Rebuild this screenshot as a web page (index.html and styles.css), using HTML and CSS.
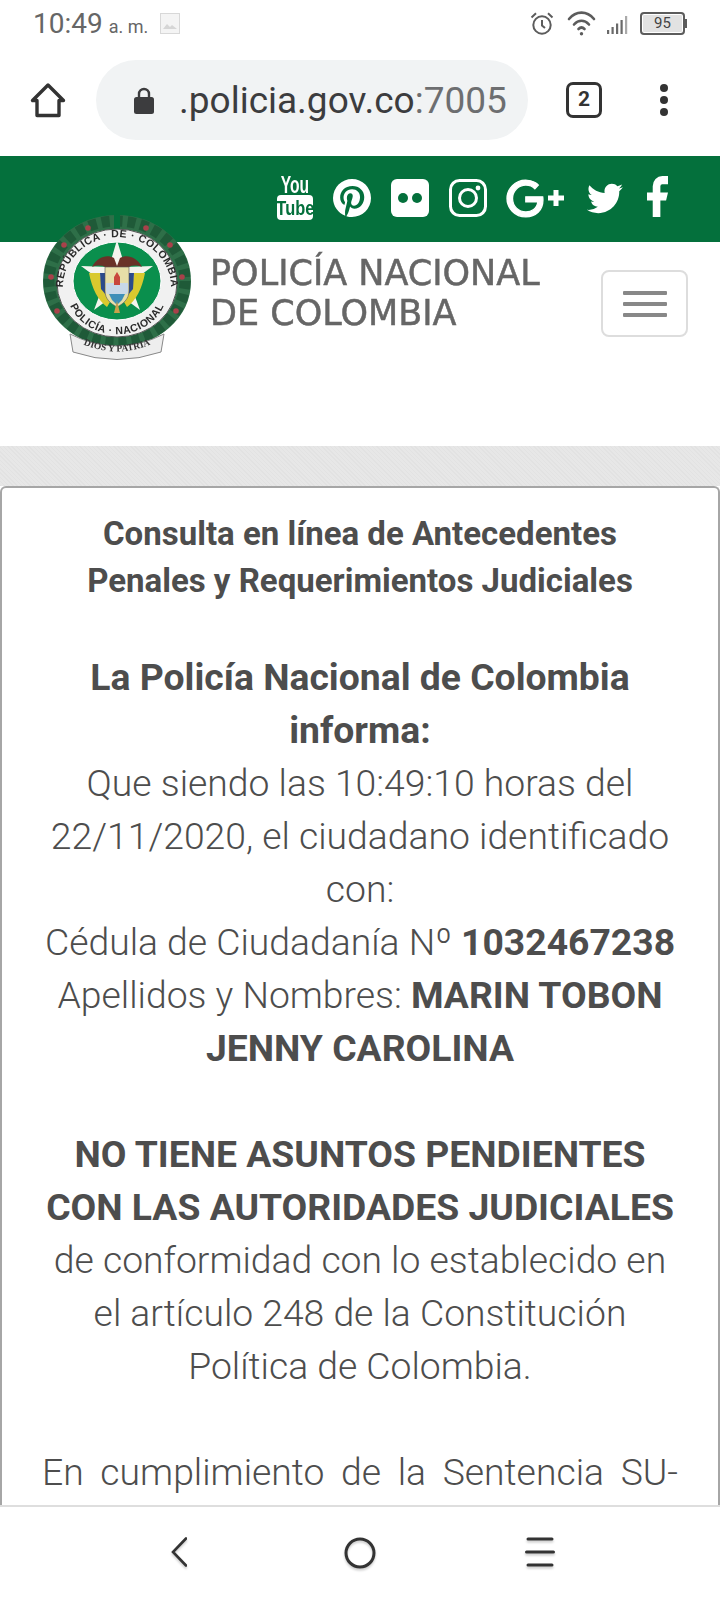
FILE: index.html
```html
<!DOCTYPE html>
<html lang="es">
<head>
<meta charset="utf-8">
<title>Consulta de Antecedentes</title>
<link rel="stylesheet" href="styles.css">
</head>
<body>
<div class="phone">
  <div class="status">
    <div class="status-left">
      <span class="clock">10:49</span><span class="ampm">a. m.</span>
      <svg class="st-img" viewBox="0 0 20 21"><rect x=".5" y=".5" width="19" height="20" fill="#f4f4f4" stroke="#d8d8d8"/><path d="M3 16l4-5 3 3 2-2 5 4z" fill="#d6d6d6"/></svg>
    </div>
    <div class="status-right">
      <svg class="st-alarm" viewBox="0 0 24 24" fill="none" stroke="#5c5c5c" stroke-width="2"><circle cx="12" cy="13.500" r="8.700"/><path d="M12 8.500v5.500l3 2.500M1.500 6L6 1.800M22.500 6L18 1.800"/></svg>
      <svg class="st-wifi" viewBox="0 0 29 25" fill="none" stroke="#5c5c5c" stroke-width="2.600" stroke-linecap="round"><path d="M2 8C9-.5 20-.5 27 8M7 13.500c4.500-5 10.500-5 15 0M11.500 18c2-2 4-2 6 0"/><circle cx="14.500" cy="22.800" r="1.700" fill="#5c5c5c" stroke="none"/></svg>
      <svg class="st-signal" viewBox="0 0 21 18" fill="#6a6a6a"><rect x="0" y="14" width="2.200" height="4"/><rect x="4.500" y="11" width="2.200" height="7"/><rect x="9" y="7.500" width="2.200" height="10.500"/><rect x="13.500" y="4" width="2.200" height="14"/><rect x="18" y="0" width="2.200" height="18" fill="#aaa"/></svg>
      <div class="battery"><span class="battery-body">95</span><span class="battery-tip"></span></div>
    </div>
  </div>

  <div class="toolbar">
    <svg class="tb-home" viewBox="0 0 36 36" fill="none" stroke="#333" stroke-width="3.400" stroke-linejoin="round"><path d="M18 3L2.500 18.500H7V33.500H29V18.500H33.500Z"/></svg>
    <div class="omnibox">
      <svg class="lock" viewBox="0 0 20 27"><path d="M5 11V7a5 5 0 0 1 10 0v4" fill="none" stroke="#3c3c3e" stroke-width="2.400"/><rect x="0" y="10" width="20" height="17" rx="2.500" fill="#3c3c3e"/></svg>
      <span class="url">.policia.gov.co<span class="port">:7005</span></span>
    </div>
    <div class="tabs">2</div>
    <div class="menu"><i></i><i></i><i></i></div>
  </div>

  <div class="social">
    <div class="yt">
      <span class="yt-you">You</span>
      <span class="yt-box"><span class="yt-tube">Tube</span></span>
    </div>
    <svg class="ic" viewBox="2 2 20 20" fill="#fff"><path d="M9.040 21.540c.96.290 1.930.460 2.960.460a10 10 0 0 0 10-10A10 10 0 0 0 12 2 10 10 0 0 0 2 12c0 4.250 2.670 7.900 6.440 9.340-.09-.78-.18-2.070 0-2.960l1.150-4.940s-.29-.58-.29-1.500c0-1.380.86-2.410 1.840-2.410.86 0 1.260.63 1.260 1.440 0 .86-.57 2.090-.86 3.270-.17.98.52 1.840 1.520 1.840 1.780 0 3.160-1.900 3.160-4.580 0-2.400-1.720-4.040-4.190-4.040-2.820 0-4.480 2.100-4.480 4.310 0 .86.280 1.730.74 2.300.09.060.09.140.060.290l-.29 1.090c0 .170-.11.230-.28.110-1.280-.56-2.020-2.380-2.020-3.850 0-3.160 2.240-6.030 6.560-6.030 3.440 0 6.120 2.470 6.120 5.750 0 3.440-2.130 6.200-5.180 6.200-.97 0-1.920-.52-2.260-1.130l-.67 2.370c-.23.86-.86 2.010-1.290 2.700v-.03z"/></svg>
    <svg class="ic" viewBox="0 0 38 38"><rect width="38" height="38" rx="6" fill="#fff"/><circle cx="12" cy="19" r="5" fill="#04703c"/><circle cx="26" cy="19" r="5" fill="#04703c"/></svg>
    <svg class="ic" viewBox="0 0 38 38" fill="none" stroke="#fff" stroke-width="3"><rect x="1.500" y="1.500" width="35" height="35" rx="9"/><circle cx="19" cy="19" r="8.500"/><circle cx="29" cy="9" r="2.400" fill="#fff" stroke="none"/></svg>
    <div class="gplus">
      <svg class="ic-g" viewBox="2 2 19.500 20" fill="#fff" stroke="#fff" stroke-width=".7"><path d="M21.350 11.100h-9.170v2.730h6.510c-.33 3.810-3.500 5.440-6.500 5.440C8.360 19.270 5 16.250 5 12c0-4.100 3.200-7.270 7.200-7.270 3.090 0 4.900 1.970 4.900 1.970L19 4.720S16.560 2 12.100 2C6.420 2 2.030 6.800 2 12c0 5.050 4.130 10 10.220 10 5.350 0 9.250-3.670 9.250-9.090 0-1.150-.12-1.810-.12-1.810z"/></svg>
      <svg class="ic-plus" viewBox="0 0 16 16" fill="#fff"><path d="M5.500 0h5v5.500H16v5h-5.500V16h-5v-5.500H0v-5h5.500z"/></svg>
    </div>
    <svg class="ic-tw" viewBox="1 4 21.500 17" fill="#fff"><path d="M22.460 6c-.77.35-1.600.58-2.460.69.88-.53 1.560-1.370 1.880-2.380-.83.5-1.750.85-2.720 1.050C18.370 4.500 17.260 4 16 4c-2.350 0-4.270 1.920-4.270 4.290 0 .34.04.67.11.98C8.280 9.090 5.110 7.380 3 4.790c-.37.63-.58 1.370-.58 2.150 0 1.490.75 2.810 1.910 3.560-.71 0-1.370-.2-1.950-.5v.03c0 2.080 1.480 3.820 3.440 4.210a4.220 4.220 0 0 1-1.930.07 4.280 4.280 0 0 0 4 2.980 8.521 8.521 0 0 1-5.330 1.840c-.34 0-.68-.02-1.020-.06C3.440 20.290 5.700 21 8.120 21 16 21 20.330 14.460 20.330 8.790c0-.19 0-.37-.01-.56.84-.6 1.560-1.360 2.140-2.230z"/></svg>
    <svg class="ic-fb" viewBox="6 2 11 20" preserveAspectRatio="none" fill="#fff"><path d="M17 2h-3a5 5 0 0 0-5 5v3H6v4h3v8h4v-8h3l1-4h-4V7a1 1 0 0 1 1-1h3z"/></svg>
  </div>

  <header class="brand">
    <svg class="emblem" viewBox="0 0 150 146">
      <defs>
        <path id="arcTop" d="M21 72A54 50 0 0 1 129 72"/>
        <path id="arcBot" d="M26 84A50 44 0 0 0 124 84"/>
        <path id="arcRib" d="M38 128Q75 145 112 128"/>
      </defs>
      <ellipse cx="75" cy="66" rx="66" ry="58" fill="none" stroke="#2e6f48" stroke-width="16"/>
      <ellipse cx="75" cy="66" rx="68" ry="60" fill="none" stroke="#1f5a38" stroke-width="11" stroke-dasharray="8 5"/>
      <path d="M72 0h6v14h-6z" fill="#04703c"/>
      <g fill="#a8414a">
        <circle cx="46" cy="13" r="2.800"/><circle cx="104" cy="13" r="2.800"/><circle cx="22" cy="30" r="2.800"/><circle cx="128" cy="30" r="2.800"/><circle cx="9" cy="62" r="2.800"/><circle cx="140" cy="62" r="2.800"/><circle cx="15" cy="96" r="2.800"/><circle cx="134" cy="96" r="2.800"/>
      </g>
      <ellipse cx="75" cy="68" rx="60" ry="54" fill="#f1f1f1" stroke="#555"/>
      <text class="em-ring"><textPath href="#arcTop" startOffset="50%" text-anchor="middle">REPÚBLICA · DE · COLOMBIA</textPath></text>
      <text class="em-ring"><textPath href="#arcBot" startOffset="50%" text-anchor="middle">POLICÍA · NACIONAL</textPath></text>
      <ellipse cx="75" cy="66" rx="44" ry="39" fill="#0a8f4d" stroke="#fff"/>
      <path d="M75 25l8 27 28-1-23 17 10 27-23-17-23 17 10-27-23-17 28 1z" fill="#f4f4ee"/>
      <path d="M50 52c5-10 15-13 22-9l3 8 3-8c7-4 17-1 22 9-8-3-14-1-18 4H68c-4-5-10-7-18-4z" fill="#6a3228"/>
      <path d="M47 58c3 16 9 27 18 34l3-5c-6-8-9-18-10-29z" fill="#d9c92e"/>
      <path d="M103 58c-3 16-9 27-18 34l-3-5c6-8 9-18 10-29z" fill="#d9c92e"/>
      <path d="M58 58h6v22l-5-6z" fill="#2b4a8c"/><path d="M92 58h-6v22l5-6z" fill="#2b4a8c"/>
      <path d="M63 52h24v24c0 8-6 13-12 16-6-3-12-8-12-16z" fill="#e7dfa8" stroke="#555" stroke-width=".6"/>
      <path d="M64 68h22v7c0 2-.5 3-1 4H65c-.5-1-1-2-1-4z" fill="#c8d8e8"/>
      <path d="M72 62l3-5 3 5v8h-6z" fill="#c8473c"/>
      <path d="M67 79h16l-3 6-5 5-5-5z" fill="#3f8fb8"/>
      <path d="M75 86l3 12h-6z" fill="#c9a24a"/>
      <path d="M28 119q47 24 94 0l-3 18q-44 15-88 0z" fill="#eee" stroke="#888"/>
      <text class="em-rib"><textPath href="#arcRib" startOffset="50%" text-anchor="middle">DIOS Y PATRIA</textPath></text>
    </svg>
    <div class="brand-name">POLICÍA NACIONAL<br>DE COLOMBIA</div>
    <button class="burger" type="button" aria-label="Menú"><i></i><i></i><i></i></button>
  </header>

  <div class="band"></div>

  <main class="card">
    <h1 class="card-title">Consulta en línea de Antecedentes<br>Penales y Requerimientos Judiciales</h1>
    <p class="body-copy"><b>La Policía Nacional de Colombia<br>informa:</b><br>Que siendo las 10:49:10 horas del<br>22/11/2020, el ciudadano identificado<br>con:<br>Cédula de Ciudadanía Nº <b>1032467238</b><br>Apellidos y Nombres: <b>MARIN TOBON<br>JENNY CAROLINA</b></p>
    <p class="body-copy"><b>NO TIENE ASUNTOS PENDIENTES<br>CON LAS AUTORIDADES JUDICIALES</b><br>de conformidad con lo establecido en<br>el artículo 248 de la Constitución<br>Política de Colombia.</p>
    <p class="body-copy justified">En cumplimiento de la Sentencia SU-</p>
  </main>

  <nav class="navbar">
    <svg class="nav-ic nav-back" viewBox="0 0 16 30" fill="none" stroke="#333" stroke-width="2.600" stroke-linecap="round"><path d="M15 1.500L2 15l13 13.500"/></svg>
    <svg class="nav-ic nav-home" viewBox="0 0 32 32" fill="none" stroke="#333" stroke-width="3"><circle cx="16" cy="16" r="14"/></svg>
    <svg class="nav-ic nav-menu" viewBox="0 0 30 30" fill="none" stroke="#333" stroke-width="3" stroke-linecap="round"><path d="M3 2h24M1.500 15h27M3 28h24"/></svg>
  </nav>
</div>
</body>
</html>
```
FILE: styles.css
```css
* { box-sizing: border-box; }
html, body { margin: 0; padding: 0; background: #fff; }
body { font-family: Roboto, "Liberation Sans", sans-serif; }

.phone {
  width: 720px;
  height: 1600px;
  display: flex;
  flex-direction: column;
  overflow: hidden;
}

/* status bar */
.status {
  height: 46px;
  flex: none;
  display: flex;
  justify-content: space-between;
  align-items: center;
  padding: 0 33px;
  color: #666;
}
.status-left { display: flex; align-items: baseline; }
.clock { font-size: 28px; font-weight: 400; }
.ampm { font-size: 18px; margin-left: 6px; font-weight: 400; }
.st-img { width: 20px; height: 21px; margin-left: 12px; align-self: center; }
.status-right { display: flex; align-items: center; }
.st-alarm { width: 24px; height: 25px; }
.st-wifi { width: 29px; height: 25px; margin-left: 13px; }
.st-signal { width: 21px; height: 18px; margin-left: 11px; margin-top: 3px; }
.battery { display: flex; align-items: center; margin-left: 12px; }
.battery-body {
  width: 45px;
  height: 23px;
  border: 2px solid #5c5c5c;
  border-radius: 4px;
  background: #e2e2e2;
  box-shadow: inset 0 0 0 1px #fff;
  font-size: 15px;
  line-height: 19px;
  text-align: center;
  color: #444;
}
.battery-tip { width: 2px; height: 9px; background: #5c5c5c; }

/* browser toolbar */
.toolbar {
  height: 110px;
  flex: none;
  display: flex;
  align-items: center;
  padding: 0 0 2px 30px;
}
.tb-home { width: 36px; height: 36px; flex: none; }
.omnibox {
  width: 432px;
  height: 80px;
  margin-left: 30px;
  border-radius: 40px;
  background: #f1f3f4;
  display: flex;
  align-items: center;
  padding-left: 38px;
}
.lock { width: 20px; height: 27px; flex: none; }
.url { margin-left: 25px; font-size: 37px; color: #3c3c3e; white-space: nowrap; }
.port { color: #6d6e70; }
.tabs {
  width: 36px;
  height: 36px;
  margin-left: 38px;
  border: 3.500px solid #333;
  border-radius: 7px;
  font-size: 21px;
  font-weight: 700;
  line-height: 29px;
  text-align: center;
  color: #333;
}
.menu {
  margin-left: 58px;
  display: flex;
  flex-direction: column;
  gap: 4px;
}
.menu i { width: 8px; height: 8px; border-radius: 50%; background: #333; display: block; }

/* social strip */
.social {
  height: 86px;
  flex: none;
  background: #04703c;
  display: flex;
  align-items: center;
  justify-content: flex-end;
  gap: 20px;
  padding: 0 52px 2px 0;
}
.yt {
  width: 36px;
  height: 44px;
  flex: none;
  display: flex;
  flex-direction: column;
  align-items: center;
  font-family: "Liberation Sans Narrow", "Liberation Sans", sans-serif;
  font-weight: 700;
  line-height: 1;
}
.yt-you {
  height: 19px;
  font-size: 23px;
  line-height: 19px;
  color: #fff;
  transform: scaleX(.68);
}
.yt-box {
  width: 36px;
  height: 25px;
  flex: none;
  border-radius: 4px;
  background: #fff;
  display: flex;
  justify-content: center;
}
.yt-tube {
  flex: none;
  color: #04703c;
  font-size: 21px;
  line-height: 25px;
  transform: scaleX(.78);
}
.ic { width: 38px; height: 38px; flex: none; }
.gplus { display: flex; align-items: center; gap: 5px; }
.ic-g { width: 36px; height: 37px; overflow: visible; }
.ic-plus { width: 16px; height: 16px; }
.ic-tw { width: 37px; height: 31px; margin-left: 2px; }
.ic-fb { width: 21px; height: 41px; margin-left: 4px; margin-top: -3px; }

/* brand header */
.brand {
  height: 204px;
  flex: none;
  display: flex;
  align-items: flex-start;
  position: relative;
}
.emblem {
  width: 150px;
  height: 146px;
  margin: -27px 0 0 42px;
  flex: none;
  filter: blur(.4px);
}
.em-ring { font: 700 10.500px "Liberation Sans", sans-serif; fill: #2a2a2a; letter-spacing: .5px; }
.em-rib { font: 700 9.500px "Liberation Serif", serif; fill: #333; }
.brand-name {
  margin: 11px 0 0 18px;
  width: 377px;
  font-family: "DejaVu Sans", sans-serif;
  font-size: 35px;
  line-height: 40px;
  color: #666;
  -webkit-text-stroke: .5px #666;
  white-space: nowrap;
  filter: blur(.5px);
  flex: none;
}
.burger {
  width: 87px;
  height: 67px;
  margin: 28px 0 0 14px;
  flex: none;
  padding: 0;
  background: #fff;
  border: 2px solid #ddd;
  border-radius: 8px;
  display: flex;
  flex-direction: column;
  align-items: center;
  justify-content: center;
  gap: 7px;
}
.burger i { width: 44px; height: 4px; border-radius: 1px; background: #888; display: block; }

/* grey band */
.band {
  height: 40px;
  flex: none;
  background: #e5e5e5 repeating-linear-gradient(45deg, #e2e2e2 0 1px, #e7e7e7 1px 3px);
}

/* card */
.card {
  flex: 1;
  min-height: 0;
  overflow: hidden;
  margin: 0 0 -8px;
  padding: 22px 40px 0;
  border: 2px solid #a6a6a6;
  border-bottom: 0;
  border-radius: 6px 6px 0 0;
  background: #fff;
  color: #4d4d4d;
  text-align: center;
}
.card-title {
  margin: 0 0 47px;
  font-size: 33px;
  font-weight: 700;
  line-height: 47px;
  white-space: nowrap;
}
.body-copy {
  margin: 0 0 53px;
  font-size: 37.300px;
  font-weight: 300;
  line-height: 53px;
  white-space: nowrap;
}
.body-copy b { font-weight: 700; }
.justified { text-align: justify; text-align-last: justify; white-space: normal; }

/* navigation bar */
.navbar {
  height: 95px;
  flex: none;
  position: relative;
  z-index: 1;
  background: #fff;
  border-top: 2px solid #dedede;
  display: flex;
  align-items: flex-start;
  padding: 30px 0 0 171px;
}
.nav-ic { filter: drop-shadow(0 2px 1px rgba(0,0,0,.2)); flex: none; }
.nav-back { width: 16px; height: 30px; }
.nav-home { width: 32px; height: 32px; margin-left: 157px; }
.nav-menu { width: 30px; height: 30px; margin-left: 149px; }
```
